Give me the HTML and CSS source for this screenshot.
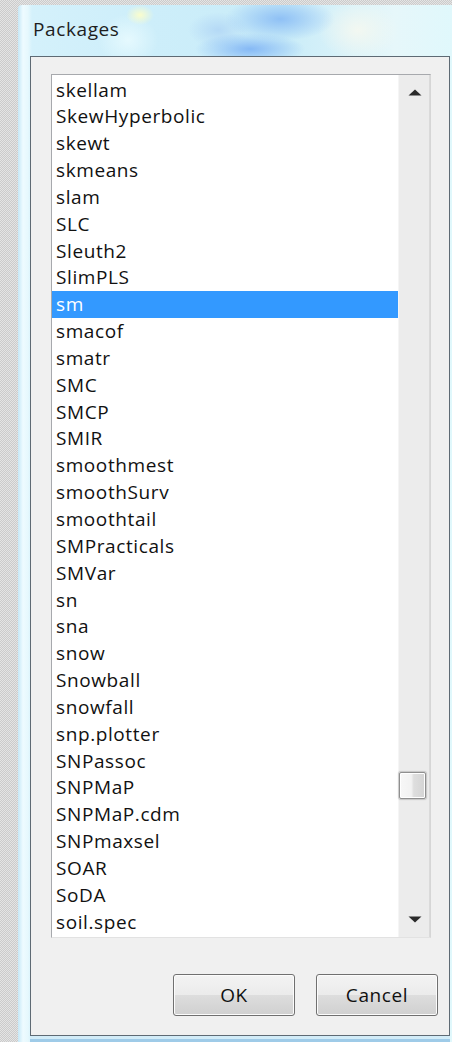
FILE: index.html
```html
<!DOCTYPE html>
<html lang="en">
<head>
<meta charset="utf-8">
<title>Packages</title>
<link rel="stylesheet" href="styles.css">
</head>
<body>
<div class="window">
  <div class="titlebar"><span class="title">Packages</span></div>
  <div class="client">
    <div class="listbox">
      <ul class="items">
        <li>skellam</li>
        <li>SkewHyperbolic</li>
        <li>skewt</li>
        <li>skmeans</li>
        <li>slam</li>
        <li>SLC</li>
        <li>Sleuth2</li>
        <li>SlimPLS</li>
        <li class="selected">sm</li>
        <li>smacof</li>
        <li>smatr</li>
        <li>SMC</li>
        <li>SMCP</li>
        <li>SMIR</li>
        <li>smoothmest</li>
        <li>smoothSurv</li>
        <li>smoothtail</li>
        <li>SMPracticals</li>
        <li>SMVar</li>
        <li>sn</li>
        <li>sna</li>
        <li>snow</li>
        <li>Snowball</li>
        <li>snowfall</li>
        <li>snp.plotter</li>
        <li>SNPassoc</li>
        <li>SNPMaP</li>
        <li>SNPMaP.cdm</li>
        <li>SNPmaxsel</li>
        <li>SOAR</li>
        <li>SoDA</li>
        <li>soil.spec</li>
      </ul>
      <div class="scrollbar">
        <div class="arrow-btn">
          <svg width="14" height="7" viewBox="0 0 14 7"><path d="M0.5 6.5 L7 0.5 L13.5 6.5 Z" fill="#2a2a2a"/></svg>
        </div>
        <div class="track"><div class="thumb"></div></div>
        <div class="arrow-btn down">
          <svg width="14" height="7" viewBox="0 0 14 7"><path d="M0.5 0.5 L13.5 0.5 L7 6.5 Z" fill="#2a2a2a"/></svg>
        </div>
      </div>
    </div>
    <div class="buttons">
      <button class="btn">OK</button>
      <button class="btn">Cancel</button>
    </div>
  </div>
</div>
</body>
</html>
```

FILE: styles.css
```css
html, body {
  margin: 0;
  padding: 0;
  height: 100%;
  overflow: hidden;
}

body {
  background: repeating-conic-gradient(#cbcbcb 0 25%, #e4e4e4 0 50%) 0 0 / 2px 2px;
  font-family: "Open Sans", "Noto Sans", sans-serif;
}

/* Aero glass frame */
.window {
  margin: 5px 0 0 18px;
  width: 443px;
  height: 1060px;
  box-sizing: border-box;
  padding: 0 12px;
  border-top-left-radius: 4px;
  background:
    radial-gradient(ellipse 55px 22px at 262px 14px, rgba(140, 190, 245, 0.95), rgba(140, 190, 245, 0) 100%),
    radial-gradient(ellipse 55px 16px at 232px 44px, rgba(130, 182, 245, 0.95), rgba(130, 182, 245, 0) 100%),
    radial-gradient(ellipse 30px 18px at 200px 25px, rgba(175, 212, 245, 0.8), rgba(175, 212, 245, 0) 100%),
    radial-gradient(ellipse 14px 10px at 122px 10px, rgba(255, 255, 200, 0.9), rgba(255, 255, 200, 0) 100%),
    radial-gradient(ellipse 40px 30px at 340px 25px, rgba(245, 248, 240, 0.9), rgba(245, 248, 240, 0) 100%),
    radial-gradient(ellipse 30px 26px at 110px 35px, rgba(235, 252, 255, 0.8), rgba(235, 252, 255, 0) 100%),
    linear-gradient(90deg, #c6e8f7 0, #eefbff 5px, #e6f8fd 10px, #d4f1fb 14px, #cdeefa 30%, #c9ecf8 60%, #e6f7fa 85%, #dff8fc 100%);
}

.titlebar {
  height: 51px;
  display: flex;
  align-items: flex-start;
  padding: 12px 0 0 3px;
  box-sizing: border-box;
}

.title {
  font-size: 19px;
  line-height: 24px;
  color: #1e1e1e;
  letter-spacing: 0.6px;
}

.client {
  width: 420px;
  height: 980px;
  box-sizing: border-box;
  border: 1px solid #5e6a74;
  background: #f0f0f0;
  padding: 17px 0 0 20px;
  display: flex;
  flex-direction: column;
  box-shadow: 0 3px 0 0 #d2ecf8, 0 6px 0 0 #9fcbe8;
}

/* list box with its vertical scrollbar */
.listbox {
  width: 380px;
  height: 864px;
  box-sizing: border-box;
  border: 1px solid #a7a9ad;
  border-right-color: #d6d6d6;
  border-bottom-color: #e2e2e2;
  background: #fff;
  display: flex;
  overflow: hidden;
}

.items {
  list-style: none;
  margin: 0;
  padding: 1.5px 0 0 0;
  width: 346px;
  flex: none;
  overflow: hidden;
}

.items li {
  height: 26.85px;
  line-height: 26.85px;
  padding-left: 4px;
  font-size: 19px;
  letter-spacing: 0.6px;
  color: #111;
  white-space: nowrap;
}

.items li.selected {
  background: #3399ff;
  color: #fff;
}

.scrollbar {
  flex: 1;
  display: flex;
  flex-direction: column;
  background: #ececec;
  border-left: 1px solid #f5f5f5;
  border-right: 1px solid #dadada;
}

.arrow-btn {
  height: 30px;
  display: flex;
  justify-content: center;
  align-items: flex-end;
  padding: 0 0 9px 2px;
  box-sizing: border-box;
}

.arrow-btn.down {
  align-items: flex-start;
  padding: 9px 0 0 2px;
}

.track {
  flex: 1;
}

.thumb {
  margin-top: 667px;
  width: 27px;
  height: 27px;
  box-sizing: border-box;
  border: 1px solid #8f8f8f;
  border-radius: 2px;
  background: linear-gradient(90deg, #f7f7f7 0, #f2f2f2 45%, #dedede 55%, #d4d4d4 100%);
  box-shadow: inset 0 0 0 1px #ffffff, 0 0 1px 1px rgba(140, 140, 140, 0.4);
}

/* dialog buttons */
.buttons {
  display: flex;
  justify-content: flex-end;
  gap: 21px;
  margin-top: 36px;
  padding-right: 11px;
}

.btn {
  width: 122px;
  height: 42px;
  border: 1px solid #707070;
  border-radius: 3px;
  background: linear-gradient(180deg, #f3f3f3 0, #ebebeb 50%, #dddddd 51%, #d0d0d0 100%);
  box-shadow: inset 0 0 0 1px #fcfcfc;
  font-family: "Open Sans", "Noto Sans", sans-serif;
  font-size: 19px;
  letter-spacing: 0.6px;
  color: #111;
  padding: 0;
}
```
